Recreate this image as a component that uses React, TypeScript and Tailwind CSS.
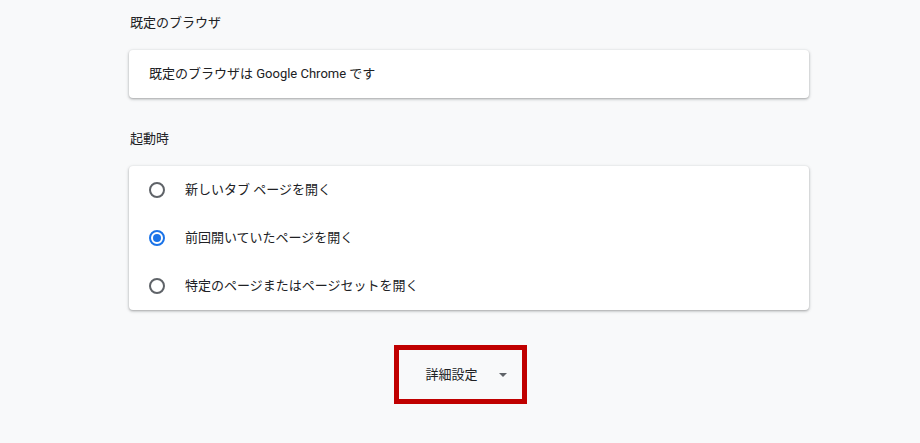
import React, { useState } from "react";

const startupOptions = [
  "新しいタブ ページを開く",
  "前回開いていたページを開く",
  "特定のページまたはページセットを開く",
];

const Radio = ({ checked }: { checked: boolean }) => (
  <span
    className={`flex h-4 w-4 shrink-0 items-center justify-center rounded-full border-2 ${
      checked ? "border-[#1a73e8]" : "border-[#5f6368]"
    }`}
  >
    {checked && <span className="h-2 w-2 rounded-full bg-[#1a73e8]" />}
  </span>
);

const App = () => {
  const [startup, setStartup] = useState<number>(1);

  return (
    <div
      className="min-h-[443px] w-full bg-[#f8f9fa] text-[13px] text-[#202124]"
      style={{ fontFamily: "Roboto, 'Noto Sans CJK JP', sans-serif" }}
    >
      <div className="pl-[129px]">
        <div className="w-[680px] pt-[14px]">
          {/* 既定のブラウザ */}
          <h2 className="h-[18px] pl-px leading-[18px]">既定のブラウザ</h2>
          <div className="mt-[18px] flex h-12 items-center rounded bg-white px-5 shadow-[0_1px_2px_0_rgba(60,64,67,0.3),0_1px_3px_1px_rgba(60,64,67,0.15)]">
            既定のブラウザは Google Chrome です
          </div>

          {/* 起動時 */}
          <h2 className="mt-8 h-[18px] pl-px leading-[18px]">起動時</h2>
          <div className="mt-[18px] flex flex-col rounded bg-white shadow-[0_1px_2px_0_rgba(60,64,67,0.3),0_1px_3px_1px_rgba(60,64,67,0.15)]">
            {startupOptions.map((label, i) => (
              <button
                key={label}
                onClick={() => setStartup(i)}
                className="flex h-12 items-center gap-5 px-5 text-left"
              >
                <Radio checked={startup === i} />
                <span>{label}</span>
              </button>
            ))}
          </div>
        </div>
      </div>

      {/* 詳細設定 */}
      <div className="mt-[35px] flex justify-center">
        <button className="flex h-[59px] w-[133px] items-center border-[5px] border-[#c00000] pl-[27px] pr-[15px]">
          <span>詳細設定</span>
          <svg width="8" height="4" viewBox="0 0 8 4" className="ml-[21px]">
            <path d="M0 0h8L4 4z" fill="#5f6368" />
          </svg>
        </button>
      </div>
    </div>
  );
};

export default App;
